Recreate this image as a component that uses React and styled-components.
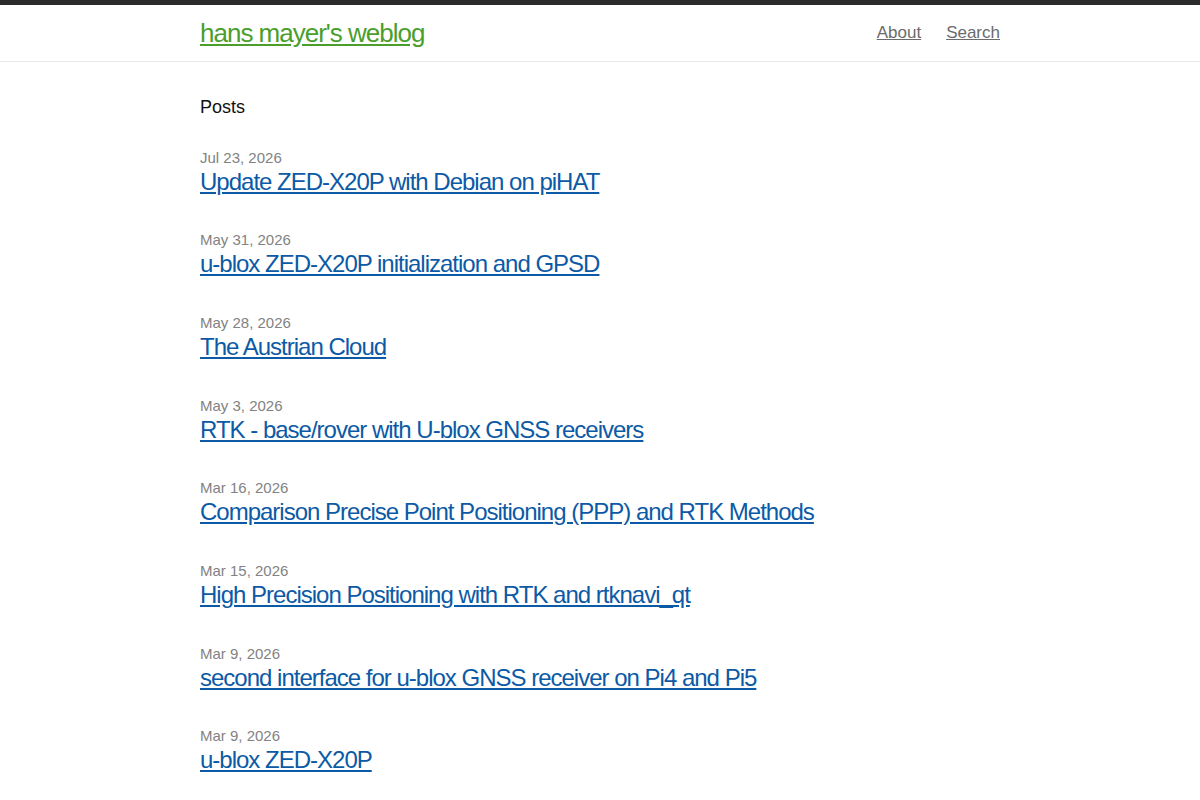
import React from "react"
import styled, { createGlobalStyle } from "styled-components"

const GlobalStyle = createGlobalStyle`
  html, body {
    margin: 0;
    padding: 0;
    background: #fff;
  }
  body {
    font-family: "Liberation Sans", Arial, Helvetica, sans-serif;
    font-size: 16px;
    line-height: 1.5;
    color: #111;
  }
`

const posts = [
  { date: "Jul 23, 2026", title: "Update ZED-X20P with Debian on piHAT" },
  { date: "May 31, 2026", title: "u-blox ZED-X20P initialization and GPSD" },
  { date: "May 28, 2026", title: "The Austrian Cloud" },
  { date: "May 3, 2026", title: "RTK - base/rover with U-blox GNSS receivers" },
  { date: "Mar 16, 2026", title: "Comparison Precise Point Positioning (PPP) and RTK Methods" },
  { date: "Mar 15, 2026", title: "High Precision Positioning with RTK and rtknavi_qt" },
  { date: "Mar 9, 2026", title: "second interface for u-blox GNSS receiver on Pi4 and Pi5" },
  { date: "Mar 9, 2026", title: "u-blox ZED-X20P" },
]

const Header = styled.header`
  border-top: 5px solid #2b2b2b;
  border-bottom: 1px solid #e8e8e8;
  min-height: 56px;
`

const Wrapper = styled.div`
  max-width: 800px;
  margin: 0 auto;
`

const HeaderRow = styled(Wrapper)`
  display: flex;
  justify-content: space-between;
  align-items: center;
  height: 56px;
`

const SiteTitle = styled.a`
  font-size: 26px;
  letter-spacing: -1px;
  line-height: 54px;
  color: #4a9e2c;
  text-decoration: underline;
`

const Nav = styled.nav`
  display: flex;
  gap: 25px;
  line-height: 54px;
`

const NavLink = styled.a`
  font-size: 17px;
  color: #6b6b6b;
  text-decoration: underline;
`

const Main = styled.main`
  padding: 32px 0 30px;
`

const Heading = styled.h2`
  font-size: 18px;
  font-weight: 400;
  line-height: 27px;
  margin: 0 0 26.5px;
`

const PostList = styled.ul`
  list-style: none;
  margin: 0;
  padding: 0;
`

const PostItem = styled.li`
  margin-bottom: 34.7px;
`

const PostMeta = styled.span`
  display: block;
  font-size: 15px;
  line-height: 20px;
  color: #828282;
`

const PostTitle = styled.h3`
  margin: 0;
  font-weight: 400;
  font-size: 24px;
  line-height: 28px;
`

const PostLink = styled.a`
  color: #0c5aa6;
  letter-spacing: -1px;
  text-decoration: underline;
`

export default function App() {
  return (
    <>
      <GlobalStyle />
      <Header>
        <HeaderRow>
          <SiteTitle href="#">hans mayer's weblog</SiteTitle>
          <Nav>
            <NavLink href="#">About</NavLink>
            <NavLink href="#">Search</NavLink>
          </Nav>
        </HeaderRow>
      </Header>
      <Main>
        <Wrapper>
          <Heading>Posts</Heading>
          <PostList>
            {posts.map((post, index) => (
              <PostItem key={index}>
                <PostMeta>{post.date}</PostMeta>
                <PostTitle>
                  <PostLink href="#">{post.title}</PostLink>
                </PostTitle>
              </PostItem>
            ))}
          </PostList>
        </Wrapper>
      </Main>
    </>
  )
}
